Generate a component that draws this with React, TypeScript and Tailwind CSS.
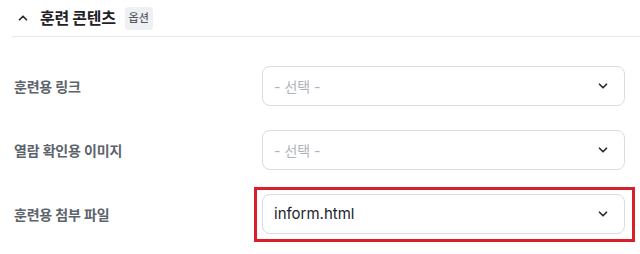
import { ChevronDown, ChevronUp } from "lucide-react"

const rows = [
  { label: "훈련용 링크", value: "" },
  { label: "열람 확인용 이미지", value: "" },
  { label: "훈련용 첨부 파일", value: "inform.html", marked: true },
]

function Select({ value }: { value: string }) {
  return (
    <div className="flex h-10 w-[363px] items-center justify-between rounded-lg border border-[#d9dce1] bg-white pl-[11px] pr-[14px]">
      {value ? (
        <span className="text-[15px] text-[#222529]">{value}</span>
      ) : (
        <span className="text-[14px] text-[#b0b4ba]">- 선택 -</span>
      )}
      <ChevronDown className="size-[14px] text-[#2a2d31]" strokeWidth={3} />
    </div>
  )
}

export default function App() {
  return (
    <div
      className="h-[254px] w-[640px] overflow-hidden bg-white pl-3"
      style={{ fontFamily: 'Inter, "Noto Sans CJK KR", sans-serif' }}
    >
      <div className="flex h-[37px] items-center border-b border-[#e6e8eb] pl-[4px]">
        <ChevronUp className="size-[14px] text-[#2a2d31]" strokeWidth={3} />
        <span className="ml-[10px] text-[16px] font-bold tracking-[-0.3px] text-[#1f2226]">
          훈련 콘텐츠
        </span>
        <span className="ml-[9px] flex h-[23px] items-center rounded bg-[#eef0f3] px-[4px] text-[11px] font-medium text-[#555a61]">
          옵션
        </span>
      </div>
      <div className="flex flex-col gap-6 pt-[29px]">
        {rows.map((row) => (
          <div key={row.label} className="flex items-center">
            <span className="w-[250px] pl-[2px] text-[14px] font-semibold tracking-[-0.2px] text-[#5d636b]">
              {row.label}
            </span>
            <div className="relative">
              <Select value={row.value} />
              {row.marked && (
                <div className="pointer-events-none absolute -top-[7px] -bottom-[8px] -left-[8px] -right-[10px] border-[3px] border-[#d9202a]" />
              )}
            </div>
          </div>
        ))}
      </div>
    </div>
  )
}
